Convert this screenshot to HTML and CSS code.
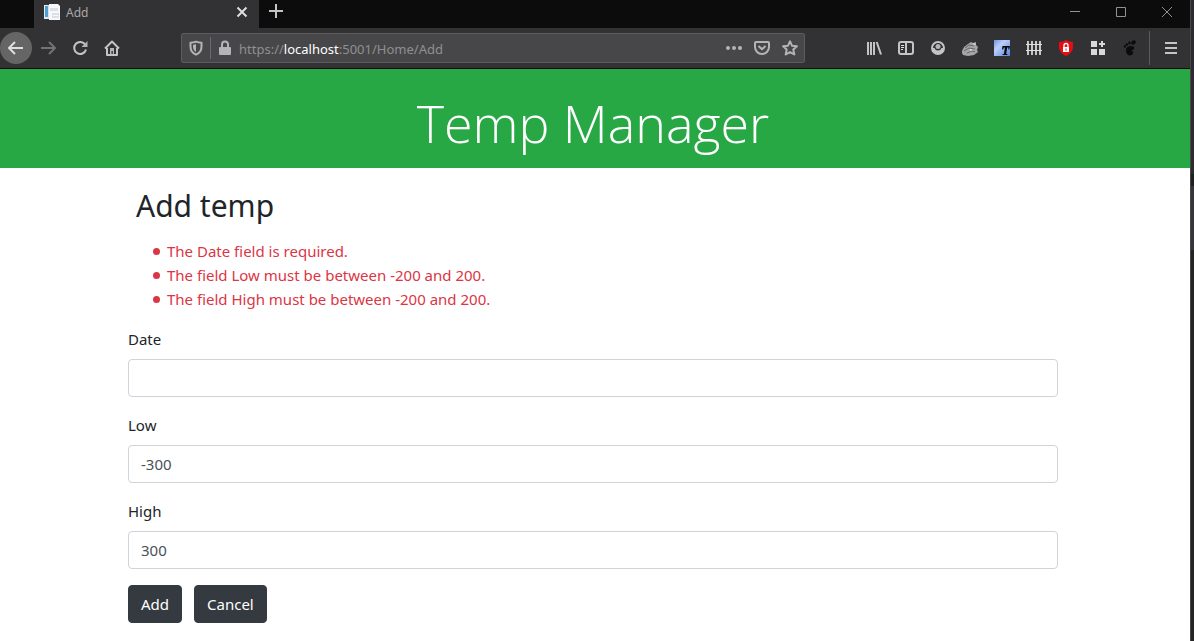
FILE: index.html
```html
<!DOCTYPE html>
<html lang="en">
<head>
<meta charset="utf-8">
<title>Add</title>
<link rel="stylesheet" href="styles.css">
</head>
<body>
<div class="window">
  <div class="titlebar">
    <div class="tab">
      <svg class="icon" viewBox="0 0 16 16" aria-hidden="true">
        <path fill="#e8eaee" d="M0 1h10v14H0z"/>
        <path fill="#4d9fd4" d="M1 2h3v11H1z"/>
        <path fill="#d3e2ef" d="M4 1h2v13H4z"/>
        <path fill="#f7f8fa" d="M5 0h9l2 2v14H5z"/>
        <path fill="#dcdfe8" d="M6 4h8v3H6zM8 9h7v5H8z"/>
        <path fill="#f7f8fa" d="M9 11h5v1H9z"/>
      </svg>
      <span class="tab-title">Add</span>
      <button class="plain" aria-label="Close tab"><svg class="icon" viewBox="0 0 16 16"><path class="line bright" d="M3.5 3.5l9 9M12.5 3.5l-9 9"/></svg></button>
    </div>
    <button class="plain new-tab" aria-label="New tab"><svg class="icon" viewBox="0 0 16 16"><path class="line" d="M8 1v14M1 8h14"/></svg></button>
    <div class="controls">
      <button class="plain control" aria-label="Minimize"><svg class="icon" viewBox="0 0 16 16"><path class="thin" d="M3 7.5h10"/></svg></button>
      <button class="plain control" aria-label="Maximize"><svg class="icon" viewBox="0 0 16 16"><path class="thin" d="M3.500 3.500h9v9h-9z"/></svg></button>
      <button class="plain control" aria-label="Close"><svg class="icon" viewBox="0 0 16 16"><path class="thin" d="M3 3l10 10M13 3L3 13"/></svg></button>
    </div>
  </div>
  <div class="toolbar">
    <button class="plain tool back" aria-label="Back"><svg class="icon" viewBox="0 0 16 16"><path class="line bright" d="M15 8H1.500M7 2L1 8l6 6"/></svg></button>
    <button class="plain tool" aria-label="Forward"><svg class="icon" viewBox="0 0 16 16"><path class="line dim" d="M1 8h13.500M9 2l6 6-6 6"/></svg></button>
    <button class="plain tool" aria-label="Reload"><svg class="icon" viewBox="0 0 16 16"><path class="line" d="M13.300 4.800A6 6 0 1 0 14 9.500"/><path class="solid" d="M15.500 1v6H9.500z"/></svg></button>
    <button class="plain tool" aria-label="Home"><svg class="icon" viewBox="0 0 16 16"><path class="line" d="M1 8.500L8 1.500l7 7M3 8v7h10V8"/><path class="solid" d="M6 8h4v6H8.800v-3H7.500v3H6z"/></svg></button>
    <div class="address">
      <svg class="icon" viewBox="0 0 16 16" aria-hidden="true"><path class="line" d="M8 1.700c2 .9 3.600 1 5.500 1v4c0 4-2 6.300-5.500 8-3.500-1.700-5.500-4-5.500-8v-4c1.900 0 3.500-.1 5.500-1z"/><path class="solid" d="M8 4v8C6 10.600 5 9 5 6.500V4.900C6.200 4.800 7 4.500 8 4z"/></svg>
      <span class="divider"></span>
      <svg class="icon" viewBox="0 0 16 16" aria-hidden="true"><path class="line" d="M5 8V4.500a3 3 0 0 1 6 0V8"/><rect class="solid" x="2" y="7" width="12" height="8" rx="1"/></svg>
      <span class="url">https://<span class="host">localhost</span>:5001/Home/Add</span>
      <button class="plain small" aria-label="Page actions"><svg class="icon" viewBox="0 0 16 16"><circle class="solid" cx="2" cy="8" r="2"/><circle class="solid" cx="8" cy="8" r="2"/><circle class="solid" cx="14" cy="8" r="2"/></svg></button>
      <button class="plain small" aria-label="Save to Pocket"><svg class="icon" viewBox="0 0 16 16"><path class="line" d="M2 2h12q1 0 1 1v4a7 7 0 0 1-14 0V3q0-1 1-1zM4.500 6L8 9.300 11.500 6"/></svg></button>
      <button class="plain small" aria-label="Bookmark this page"><svg class="icon" viewBox="0 0 16 16"><path class="line" d="M8 1.300l2 4.400 4.900.6-3.600 3.300 1 4.900L8 12.100l-4.300 2.400 1-4.900L1.100 6.300 6 5.700z"/></svg></button>
    </div>
    <button class="plain tool" aria-label="Library"><svg class="icon" viewBox="0 0 16 16"><path class="line" d="M2 2v13M5 2v13M8 2v13M10.700 2l4.300 12.500"/></svg></button>
    <button class="plain tool" aria-label="Sidebars"><svg class="icon" viewBox="0 0 16 16"><rect class="line" x="1" y="2" width="14" height="12" rx="2"/><path class="line" d="M8 2v12"/><path class="thin bright" d="M3 5.500h3M3 7.500h3M3 9.500h2"/></svg></button>
    <button class="plain tool" aria-label="Account"><svg class="icon" viewBox="0 0 16 16"><circle class="line" cx="8" cy="8" r="6"/><path class="solid bright" fill-rule="evenodd" d="M2 8h2.500a3.700 3.700 0 0 0 7 0H14a6 6 0 0 1-12 0z"/><circle class="solid" cx="8" cy="6.500" r="2.500"/></svg></button>
    <button class="plain tool" aria-label="Badger extension"><svg class="icon" viewBox="0 0 16 16"><path fill="#a5a5a5" d="M0 11l2-4 4-3 3-2 2 1 3-1v3l2 2-1 3 1 2-4 3-6 1-5-1-1-2z"/><path fill="none" stroke="#555" stroke-width=".8" d="M3 8l4-3 5 1M2 11l5-3 6 1M5 13l5-2 3 1"/><path fill="#e4e4e4" d="M11 3l3 1-2 1zM8 9l3 1-3 1z"/></svg></button>
    <button class="plain tool" aria-label="Text extension"><svg class="icon" viewBox="0 0 16 16"><defs><linearGradient id="sky" x2="1" y2="1"><stop stop-color="#6f96e6"/><stop offset=".35" stop-color="#bccff8"/><stop offset="1" stop-color="#5a84e0"/></linearGradient></defs><path fill="url(#sky)" d="M0 0h16v16H0z"/><path fill="#080a12" d="M8.500 6H16l-.7 3.500h-.9l-.1-2h-1.100L12.200 14h1.300l-.2 1H8.500l.2-1h1.200l1-6.500H10l-1 2h-1z"/></svg></button>
    <button class="plain tool" aria-label="Fence extension"><svg class="icon" viewBox="0 0 16 16"><path class="line" d="M2 1v14M6 1v14M10 1v14M14 1v14"/><path class="thin bright" d="M0 4.500h16M0 10.500h16"/></svg></button>
    <button class="plain tool" aria-label="Shield extension"><svg class="icon" viewBox="0 0 16 16"><path fill="#e40d12" d="M8 0c2 1.300 4.500 2 7 2v5c0 4-2.500 7-7 9-4.500-2-7-5-7-9V2c2.500 0 5-.7 7-2z"/><path fill="none" stroke="#fff" stroke-width="1.300" d="M6 7V5.500a2 2 0 0 1 4 0V7"/><path fill="#fff" d="M5 7h6v5H5z"/><path fill="#e40d12" d="M7.500 8.500h1v2h-1z"/></svg></button>
    <button class="plain tool" aria-label="Extensions"><svg class="icon" viewBox="0 0 16 16"><path fill="#d8d8da" d="M1 1h6v6H1zM1 9h6v6H1zM9 9h6v6H9zM11 1h2v2h2v2h-2v2h-2V5H9V3h2z"/></svg></button>
    <button class="plain tool" aria-label="GNOME extension"><svg class="icon" viewBox="0 0 16 16"><g fill="#0b0b0c"><ellipse cx="11.500" cy="2.500" rx="2.500" ry="1.900" transform="rotate(-40 11.500 2.500)"/><ellipse cx="7.500" cy="3" rx="1.200" ry="1.700"/><ellipse cx="4.800" cy="4.500" rx="1.100" ry="1.500"/><ellipse cx="2.800" cy="6.500" rx="1" ry="1.400"/><path d="M9 6c4 0 4 3 1.500 4-1.500.6-1.500 1.500 0 1.300 1.500-.3 1 4.200-2.500 4.200-3 0-4-3-4-5.500S6 6 9 6z"/></g></svg></button>
    <span class="separator"></span>
    <button class="plain tool" aria-label="Open menu"><svg class="icon" viewBox="0 0 16 16"><path class="line" d="M2 3h12M2 8h12M2 13h12"/></svg></button>
  </div>
  <div class="page">
    <header class="banner"><h1>Temp Manager</h1></header>
    <main class="content">
      <h2>Add temp</h2>
      <form>
        <ul class="errors">
          <li>The Date field is required.</li>
          <li>The field Low must be between -200 and 200.</li>
          <li>The field High must be between -200 and 200.</li>
        </ul>
        <div class="group"><label for="date">Date</label><input id="date" type="text" value=""></div>
        <div class="group"><label for="low">Low</label><input id="low" type="text" value="-300"></div>
        <div class="group"><label for="high">High</label><input id="high" type="text" value="300"></div>
        <div class="actions">
          <button class="btn" type="submit">Add</button>
          <a class="btn" href="#">Cancel</a>
        </div>
      </form>
    </main>
  </div>
</div>
<div class="edge"></div>
</body>
</html>
```
FILE: styles.css
```css
* { box-sizing: border-box; }
body {
  margin: 0;
  min-height: 100vh;
  display: flex;
  background: #fff;
  color: #212529;
  font: 15px/24px "Noto Sans", "Open Sans", sans-serif;
}
.window { flex: 1; min-width: 0; display: flex; flex-direction: column; }
.edge {
  width: 4px;
  border-left: 1px solid #48484a;
  background: linear-gradient(#2c2c30 174px, #202021 174px, #202021 186px, #35353b 186px, #35353b 250px, #242425 250px);
}
.icon { width: 16px; height: 16px; display: block; flex: none; }
.line { fill: none; stroke: #c4c4c6; stroke-width: 2; stroke-linejoin: round; }
.thin { fill: none; stroke: #929292; stroke-width: 1; }
.solid { fill: #b4b4b6; }
.solid.bright { fill: #c4c4c6; }
.line.bright, .thin.bright { stroke: #dededf; }
.line.dim { stroke: #737375; }
.address .line { stroke: #b4b4b6; }
.plain {
  display: flex;
  align-items: center;
  justify-content: center;
  padding: 0;
  border: 0;
  background: none;
}

.titlebar { display: flex; height: 28px; padding-left: 34px; background: #0c0c0d; }
.tab {
  display: flex;
  align-items: center;
  gap: 6px;
  width: 225px;
  padding: 0 9px 4px 10px;
  background: #323234;
}
.tab-title { flex: 1; padding-top: 2px; color: #a9a9ab; font-size: 12px; line-height: 20px; }
.new-tab { width: 34px; padding-bottom: 6px; }
.controls { display: flex; margin-left: auto; }
.control { width: 46px; padding-bottom: 5px; }

.toolbar {
  display: flex;
  align-items: center;
  height: 41px;
  padding-right: 3px;
  border-bottom: 1px solid #0c0c0d;
  background: #323234;
}
.tool { width: 32px; height: 32px; flex: none; }
.back { border-radius: 50%; background: #656566; }
.address {
  flex: 1;
  display: flex;
  align-items: center;
  min-width: 0;
  height: 30px;
  margin: 0 53px;
  padding: 0 6px;
  border: 1px solid #5c5c5e;
  border-radius: 2px;
  background: #474749;
}
.divider { width: 1px; height: 22px; margin: 0 6px; background: #646c78; }
.url { flex: 1; margin-left: 6px; padding-top: 2px; color: #8f8f91; font-size: 13px; line-height: 20px; white-space: nowrap; }
.host { color: #fff; }
.small { width: 28px; height: 28px; }
.small:last-child { margin-right: -6px; }
.separator { width: 1px; height: 34px; margin: 0 5px 0 3px; background: #5b5b5d; }

.page { flex: 1; background: #fff; }
.banner { padding: 20px 4px 12px 0; background: #28a745; color: #fff; text-align: center; }
h1 { margin: 0; font-family: "Open Sans", "Noto Sans", sans-serif; font-size: 52px; line-height: 67px; font-weight: 300; }
.content { max-width: 934px; margin: 0 auto; padding: 19px 4px 0 0; }
h2 { margin: 0 8px 14px; font-size: 30px; line-height: 38px; font-weight: 400; }
.errors { margin: 0 0 16px; padding-left: 25px; list-style: none; color: #dc3545; }
.errors li { display: flex; align-items: center; gap: 7px; }
.errors li::before { content: ""; width: 7px; height: 7px; border-radius: 50%; background: #dc3545; }
.group { margin-bottom: 16px; }
.group label { display: block; margin-bottom: 8px; }
.group input {
  display: block;
  width: 100%;
  height: 38px;
  padding: 6px 12px;
  border: 1px solid #ced4da;
  border-radius: 4px;
  background: #fff;
  color: #495057;
  font: inherit;
}
.actions { display: flex; gap: 12px; }
.btn {
  padding: 6px 12px;
  border: 1px solid #343a40;
  border-radius: 4px;
  background: #343a40;
  color: #fff;
  font: inherit;
  text-decoration: none;
}
```
